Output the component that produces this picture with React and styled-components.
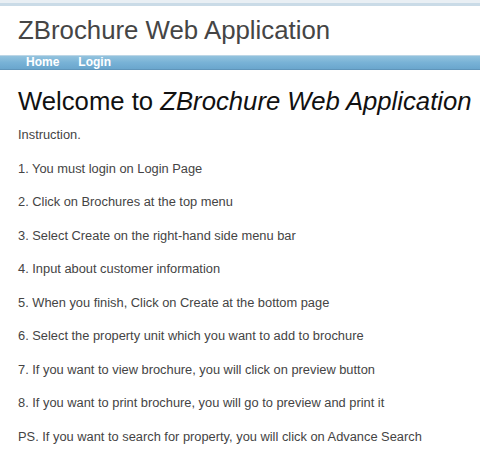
import React from 'react';
import styled, { createGlobalStyle } from 'styled-components';

const GlobalStyle = createGlobalStyle`
  html, body {
    margin: 0;
    padding: 0;
    background: #ffffff;
    font-family: 'Liberation Sans', Arial, sans-serif;
  }
`;

const Page = styled.div`
  width: 480px;
  min-height: 453px;
  background: #ffffff;
  overflow: hidden;
`;

const TopStrip = styled.div`
  height: 3px;
  background: #e9eff4;
  border-bottom: 3px solid #cadbe7;
`;

const Header = styled.header`
  padding: 9px 0 0 18px;
  height: 49px;
  box-sizing: border-box;
`;

const SiteTitle = styled.h1`
  margin: 0;
  font-size: 25.8px;
  font-weight: normal;
  color: #454545;
  line-height: 30px;
`;

const NavBar = styled.nav`
  height: 13px;
  display: flex;
  align-items: center;
  gap: 19px;
  padding-left: 26px;
  background: linear-gradient(to bottom, #93c3de 0%, #78b2d6 50%, #6aa6cd 100%);
  border-top: 1px solid #bcd6e6;
  border-bottom: 1px solid #5f95ba;
`;

const NavLink = styled.a`
  color: #ffffff;
  font-size: 12px;
  font-weight: bold;
  line-height: 13px;
  text-decoration: none;
`;

const Main = styled.main`
  padding: 16px 0 0 18px;
`;

const Welcome = styled.h2`
  margin: 0 0 11px;
  font-size: 25.7px;
  font-weight: normal;
  color: #111111;
  line-height: 30px;
  white-space: nowrap;

  em {
    font-style: italic;
  }
`;

const Steps = styled.div`
  display: flex;
  flex-direction: column;
  gap: 18.5px;
`;

const Para = styled.p`
  margin: 0;
  font-size: 12.85px;
  line-height: 15px;
  color: #444444;
  white-space: nowrap;
`;

const steps = [
  'Instruction.',
  '1. You must login on Login Page',
  '2. Click on Brochures at the top menu',
  '3. Select Create on the right-hand side menu bar',
  '4. Input about customer information',
  '5. When you finish, Click on Create at the bottom page',
  '6. Select the property unit which you want to add to brochure',
  '7. If you want to view brochure, you will click on preview button',
  '8. If you want to print brochure, you will go to preview and print it',
  'PS. If you want to search for property, you will click on Advance Search',
];

const App = () => (
  <Page>
    <GlobalStyle />
    <TopStrip />
    <Header>
      <SiteTitle>ZBrochure Web Application</SiteTitle>
    </Header>
    <NavBar>
      <NavLink href="#">Home</NavLink>
      <NavLink href="#">Login</NavLink>
    </NavBar>
    <Main>
      <Welcome>
        Welcome to <em>ZBrochure Web Application</em>
      </Welcome>
      <Steps>
        {steps.map((s) => (
          <Para key={s}>{s}</Para>
        ))}
      </Steps>
    </Main>
  </Page>
);

export default App;
